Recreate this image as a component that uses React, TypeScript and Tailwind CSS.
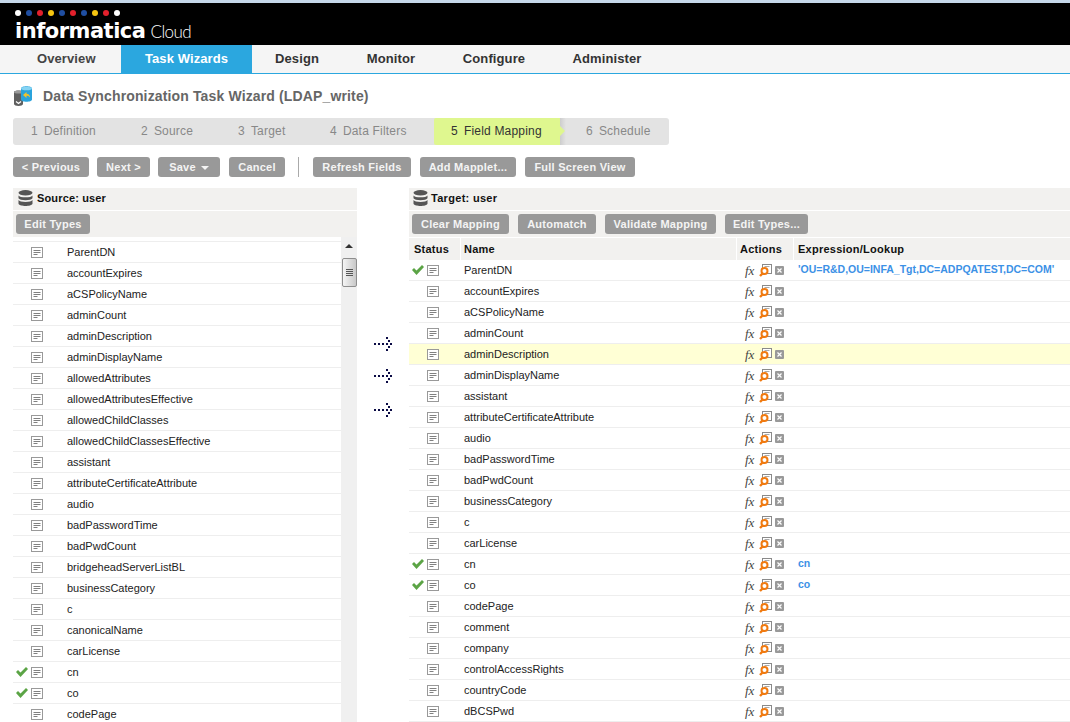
import React from "react";

const sourceFields = [
  "ParentDN", "accountExpires", "aCSPolicyName", "adminCount", "adminDescription", "adminDisplayName",
  "allowedAttributes", "allowedAttributesEffective", "allowedChildClasses", "allowedChildClassesEffective",
  "assistant", "attributeCertificateAttribute", "audio", "badPasswordTime", "badPwdCount",
  "bridgeheadServerListBL", "businessCategory", "c", "canonicalName", "carLicense", "cn", "co", "codePage",
];

const targetFields: Array<{ name: string; mapped?: boolean; expr?: string; selected?: boolean }> = [
  { name: "ParentDN", mapped: true, expr: "'OU=R&D,OU=INFA_Tgt,DC=ADPQATEST,DC=COM'" },
  { name: "accountExpires" },
  { name: "aCSPolicyName" },
  { name: "adminCount" },
  { name: "adminDescription", selected: true },
  { name: "adminDisplayName" },
  { name: "assistant" },
  { name: "attributeCertificateAttribute" },
  { name: "audio" },
  { name: "badPasswordTime" },
  { name: "badPwdCount" },
  { name: "businessCategory" },
  { name: "c" },
  { name: "carLicense" },
  { name: "cn", mapped: true, expr: "cn" },
  { name: "co", mapped: true, expr: "co" },
  { name: "codePage" },
  { name: "comment" },
  { name: "company" },
  { name: "controlAccessRights" },
  { name: "countryCode" },
  { name: "dBCSPwd" },
];

const steps = [
  { num: "1", label: "Definition", cls: "w-[110px] pl-[18px]" },
  { num: "2", label: "Source", cls: "w-[97px] pl-[18px]" },
  { num: "3", label: "Target", cls: "w-[92px] pl-[18px]" },
  { num: "4", label: "Data Filters", cls: "w-[122px] pl-[18px]" },
];

const dots = ["#ffffff", "#1f4ea1", "#e2202c", "#f6c511", "#1f4ea1", "#e2202c", "#1f4ea1", "#f6c511", "#e2202c", "#ffffff"];

const DocIcon = () => (
  <svg width="12" height="11" viewBox="0 0 12 11" className="shrink-0">
    <rect x="0.5" y="0.5" width="11" height="10" fill="#fff" stroke="#999" />
    <path d="M2.500 3.500h7M2.500 5.500h7M2.500 7.500h4" stroke="#808080" strokeWidth="1" />
  </svg>
);

const Check = () => (
  <svg width="12" height="10" viewBox="0 0 12 10" className="shrink-0">
    <path d="M0 5l2-2 2.500 2.500L10 0l2 2-7.500 8z" fill="#5ba445" />
  </svg>
);

const DbIcon = () => (
  <svg width="15" height="17" viewBox="0 0 15 17" className="shrink-0">
    <ellipse cx="7.5" cy="2.800" rx="7" ry="2.700" fill="#555" />
    <path d="M.5 5.400c1 2.600 13 2.600 14 0v2.800c-1 2.600-13 2.600-14 0z" fill="#555" />
    <path d="M.5 10c1 2.600 13 2.600 14 0v3.800c-1 3-13 3-14 0z" fill="#555" />
  </svg>
);

const WizardIcon = () => (
  <svg width="19" height="20" viewBox="0 0 19 20" className="shrink-0">
    <path d="M1 6c0-2 9-2 9 0v12c0 2.500-9 2.500-9 0z" fill="#5f5f5f" />
    <ellipse cx="5.500" cy="6" rx="4.500" ry="1.600" fill="#9a9a9a" />
    <path d="M8 2.500c0-3 11-3 11 0v11c0 3-11 3-11 0z" fill="#2aa3dc" />
    <ellipse cx="13.500" cy="2.500" rx="5.500" ry="1.800" fill="#86d4f4" />
    <path d="M10 9l3.500-3v1.800c2 0 3.500 1.200 3.500 3.700-1-1.400-2.200-1.800-3.500-1.800V12z" fill="#f3c32b" />
    <path d="M3 15.500l2.500 2 2.500-2" fill="none" stroke="#fff" strokeWidth="1.200" />
  </svg>
);

const LookupIcon = () => (
  <svg width="13" height="13" viewBox="0 0 13 13" className="shrink-0">
    <rect x="3.500" y="0.500" width="9" height="9" fill="#fff" stroke="#8a8a8a" />
    <path d="M5.500 2.500h5" stroke="#aaa" />
    <circle cx="5.500" cy="7" r="3" fill="#fff" stroke="#f07a10" strokeWidth="2" />
    <path d="M3.500 9.500L1 12" stroke="#f07a10" strokeWidth="2.400" />
  </svg>
);

const ClearIcon = () => (
  <svg width="9" height="9" viewBox="0 0 9 9" className="shrink-0">
    <rect width="9" height="9" rx="1" fill="#999" />
    <path d="M2.500 2.500l4 4M6.500 2.500l-4 4" stroke="#fff" strokeWidth="1.200" />
  </svg>
);

const DottedArrow = () => (
  <svg width="18" height="14" viewBox="0 0 18 14" className="block">
    <path
      d="M0 6h2v2H0zM4 6h2v2H4zM8 6h2v2H8zM12 6h2v2h-2zM16 6h2v2h-2zM12 0h2v2h-2zM14 3h2v2h-2zM14 9h2v2h-2zM12 12h2v2h-2z"
      fill="#0b0b45"
    />
  </svg>
);

const GrayButton = ({ children, className = "" }: { children: React.ReactNode; className?: string }) => (
  <button className={`h-5 rounded-[3px] bg-[#999999] text-center text-[11px] font-bold leading-5 tracking-[0.25px] text-[#f4f4f4] ${className}`}>
    {children}
  </button>
);

export default function App() {
  return (
    <div className="h-[722px] w-[1070px] overflow-hidden bg-white font-['Liberation_Sans',Arial,sans-serif] text-[#222]">
      {/* header */}
      <div className="h-[3px] bg-[#c6d7ea]" />
      <div className="h-[42px] bg-black pl-[15px] pt-[7px] text-white">
        <div className="flex gap-[5px]">
          {dots.map((c, i) => (
            <span key={i} className="h-[6px] w-[6px] rounded-full" style={{ backgroundColor: c }} />
          ))}
        </div>
        <div className="mt-[2px] flex h-[26px] items-baseline leading-[26px]">
          <span className="font-['DejaVu_Sans',sans-serif] text-[21px] font-bold tracking-[-0.5px]">informatica</span>
          <span className="ml-[5px] font-['Lato',sans-serif] text-[17px] font-light tracking-[-0.6px]">Cloud</span>
        </div>
      </div>

      {/* nav */}
      <div className="flex h-[29px] border-b border-[#2ba7df] bg-[#f5f5f5] text-[13px] font-bold leading-[28px] tracking-[0.1px] text-[#333]">
        <div className="w-[121px] pl-[37px] text-[#444]">Overview</div>
        <div className="w-[131px] bg-[#2ba7df] text-center text-white">Task Wizards</div>
        <div className="w-[90px] text-center">Design</div>
        <div className="w-[98px] text-center">Monitor</div>
        <div className="w-[108px] text-center">Configure</div>
        <div className="w-[118px] text-center">Administer</div>
      </div>

      {/* title */}
      <div className="flex h-[44px] items-center pl-[13px]">
        <WizardIcon />
        <span className="ml-[11px] text-[14px] font-bold tracking-[0.14px] text-[#666]">Data Synchronization Task Wizard (LDAP_write)</span>
      </div>

      {/* stepper */}
      <div className="ml-[13px] flex h-[27px] w-[656px] rounded-[3px] bg-[#e3e3e3] text-[12px] leading-[27px] tracking-[0.2px] text-[#888]">
        {steps.map((s) => (
          <div key={s.num} className={s.cls}>
            {s.num}
            <span className="ml-[6px]">{s.label}</span>
          </div>
        ))}
        <div className="relative w-[126px] rounded-l-[2px] bg-[#dff78f] pl-[17px] text-[#333]">
          5<span className="ml-[6px]">Field Mapping</span>
          <span className="absolute inset-y-0 left-full w-[6px] bg-linear-to-r from-[#cdcdcd] to-[#e3e3e3]" />
          <span className="absolute left-full top-[8px] border-y-[5px] border-l-[5px] border-y-transparent border-l-[#dff78f]" />
        </div>
        <div className="pl-[26px]">
          6<span className="ml-[6px]">Schedule</span>
        </div>
      </div>

      {/* action buttons */}
      <div className="ml-[13px] mt-[12px] flex h-5 items-center">
        <GrayButton className="w-[76px]">{"< Previous"}</GrayButton>
        <GrayButton className="ml-[8px] w-[53px]">{"Next >"}</GrayButton>
        <GrayButton className="ml-[8px] w-[62px]">
          Save
          <span className="ml-[5px] inline-block border-x-[4px] border-t-[4px] border-x-transparent border-t-[#f4f4f4] align-middle" />
        </GrayButton>
        <GrayButton className="ml-[9px] w-[56px]">Cancel</GrayButton>
        <div className="ml-[13px] h-[20px] w-px bg-[#aaa]" />
        <GrayButton className="ml-[14px] w-[98px]">Refresh Fields</GrayButton>
        <GrayButton className="ml-[9px] w-[96px]">Add Mapplet...</GrayButton>
        <GrayButton className="ml-[9px] w-[110px]">Full Screen View</GrayButton>
      </div>

      {/* mapping area */}
      <div className="mt-[11px] flex pl-[13px]">
        {/* source */}
        <div className="w-[344px] shrink-0">
          <div className="flex h-[22px] items-center gap-[4px] bg-[#f2f1ef] pb-[2px] pl-[5px] text-[11px] font-bold tracking-[0.15px] text-[#111]">
            <DbIcon />
            Source: user
          </div>
          <div className="mt-px flex h-[26px] items-start bg-[#f2f1ef] pl-[3px] pt-[3px]">
            <GrayButton className="w-[74px]">Edit Types</GrayButton>
          </div>
          <div className="flex">
            <div className="w-[328px] pt-[4px]">
              {sourceFields.map((name) => (
                <div key={name} className="flex h-[21px] items-center border-t border-[#eeeeee] text-[11px] text-[#222]">
                  <div className="flex w-[54px] items-center justify-end gap-[3px] pr-[24px]">
                    {(name === "cn" || name === "co") && <Check />}
                    <DocIcon />
                  </div>
                  {name}
                </div>
              ))}
            </div>
            <div className="flex h-[485px] w-[16px] flex-col items-start bg-[#f0f0f0]">
              <svg width="8" height="4" viewBox="0 0 8 4" className="ml-[4px] mt-[7px]">
                <path d="M4 0l4 4H0z" fill="#333" />
              </svg>
              <div className="ml-px mt-[10px] flex h-[29px] w-[15px] flex-col items-center justify-center gap-px rounded-[2px] border border-[#8e8e8e] bg-linear-to-r from-[#f5f5f5] to-[#c8c8c8]">
                <span className="h-px w-[7px] bg-[#555]" />
                <span className="h-px w-[7px] bg-[#555]" />
                <span className="h-px w-[7px] bg-[#555]" />
                <span className="h-px w-[7px] bg-[#555]" />
              </div>
            </div>
          </div>
        </div>

        {/* arrows between the panels */}
        <div className="flex w-[52px] shrink-0 flex-col items-start pl-[17px] pt-[149px]">
          <DottedArrow />
          <div className="mt-[18px]"><DottedArrow /></div>
          <div className="mt-[20px]"><DottedArrow /></div>
        </div>

        {/* target */}
        <div className="min-w-0 flex-1">
          <div className="flex h-[22px] items-center gap-[3px] bg-[#f2f1ef] pb-[2px] pl-[4px] text-[11px] font-bold tracking-[0.3px] text-[#111]">
            <DbIcon />
            Target: user
          </div>
          <div className="mt-px flex h-[26px] items-start bg-[#f2f1ef] pl-[3px] pt-[3px]">
            <GrayButton className="w-[97px]">Clear Mapping</GrayButton>
            <GrayButton className="ml-[9px] w-[78px]">Automatch</GrayButton>
            <GrayButton className="ml-[9px] w-[111px]">Validate Mapping</GrayButton>
            <GrayButton className="ml-[9px] w-[83px]">Edit Types...</GrayButton>
          </div>
          <div className="mt-px grid h-[22px] grid-cols-[51px_276px_57px_1fr] text-[11px] font-bold leading-[22px] tracking-[0.25px] text-[#111]">
            <div className="bg-[#f2f1ef] pl-[5px]">Status</div>
            <div className="ml-px bg-[#f2f1ef] pl-[3px]">Name</div>
            <div className="ml-px bg-[#f2f1ef] pl-[3px]">Actions</div>
            <div className="ml-px bg-[#f2f1ef] pl-[4px]">Expression/Lookup</div>
          </div>
          {targetFields.map((f) => (
            <div
              key={f.name}
              className={`grid h-[21px] grid-cols-[51px_276px_57px_1fr] items-center border-b border-[#eeeeee] text-[11px] text-[#222] ${f.selected ? "bg-[#ffffd5]" : ""}`}
            >
              <div className="flex items-center justify-end gap-[3px] pr-[21px]">
                {f.mapped && <Check />}
                <DocIcon />
              </div>
              <div className="pl-[4px]">{f.name}</div>
              <div className="flex items-center pl-[9px]">
                <span className="w-[14px] font-['Liberation_Serif',serif] text-[13px] italic leading-none text-[#444]">fx</span>
                <LookupIcon />
                <span className="ml-[3px]"><ClearIcon /></span>
              </div>
              <div className="whitespace-nowrap pl-[5px] text-[10.5px] font-bold text-[#3c91e6]">{f.expr}</div>
            </div>
          ))}
        </div>
      </div>
    </div>
  );
}
